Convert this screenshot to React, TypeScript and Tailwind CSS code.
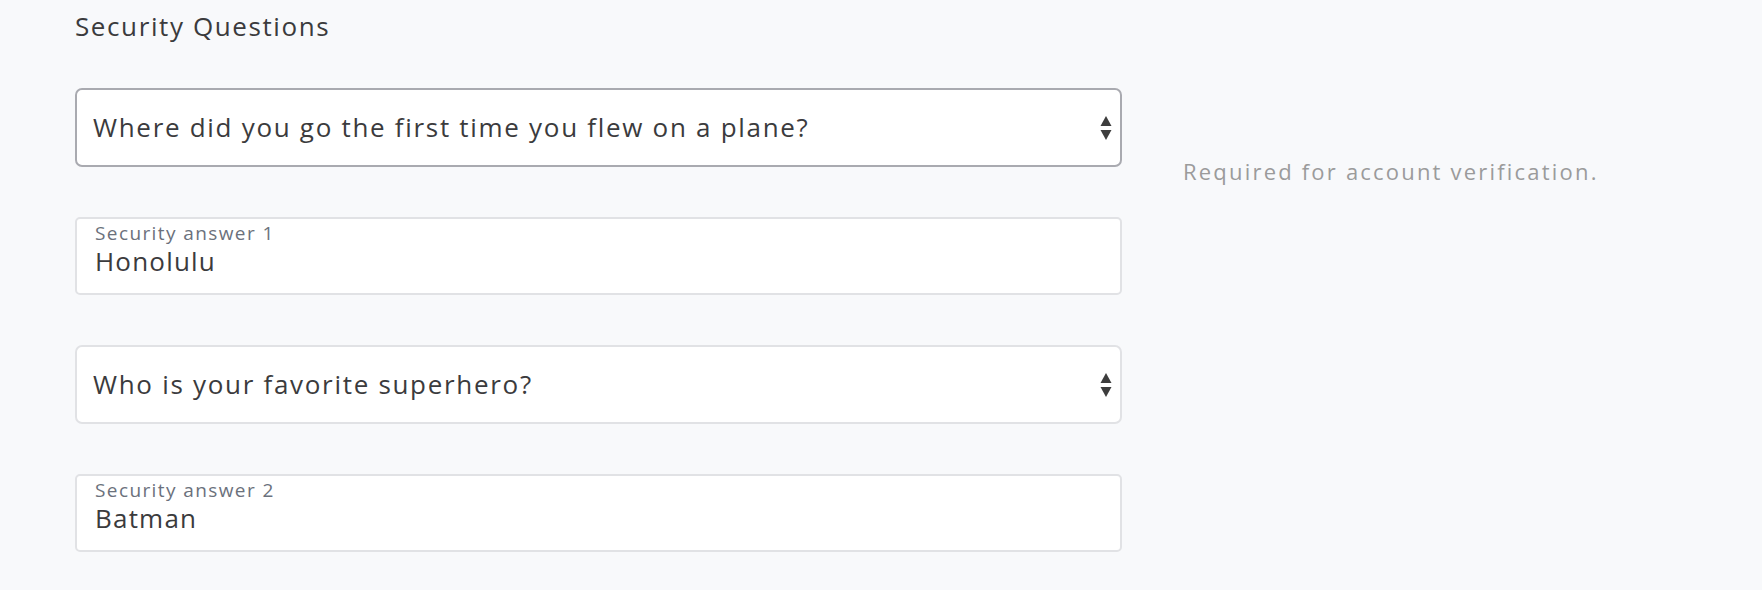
import { ChangeEvent, useState } from 'react';

const questions = [
  'Where did you go the first time you flew on a plane?',
  'Who is your favorite superhero?',
  'What was the name of your first pet?',
  'In what city were you born?',
];

function Arrows() {
  return (
    <svg className="pointer-events-none absolute right-[10px] top-1/2 -translate-y-1/2" width="12" height="26" viewBox="0 0 12 26">
      <path d="M6 1 L11.5 11 L0.5 11 Z" fill="#3d3d3d" />
      <path d="M0.5 15 L11.5 15 L6 25 Z" fill="#3d3d3d" />
    </svg>
  );
}

function QuestionSelect({ value, focused, onChange }: { value: string; focused?: boolean; onChange: (v: string) => void }) {
  return (
    <div className="relative">
      <select
        value={value}
        onChange={(e: ChangeEvent<HTMLSelectElement>) => onChange(e.target.value)}
        className={`h-[79px] w-full appearance-none rounded-[7px] border-2 bg-white pl-[16px] pr-10 text-[26px] tracking-[1.7px] text-[#3b3b3d] outline-none ${
          focused ? 'border-[#a9aab0]' : 'border-[#e1e2e5]'
        }`}
      >
        {questions.map(q => (
          <option key={q} value={q}>{q}</option>
        ))}
      </select>
      <Arrows />
    </div>
  );
}

function AnswerField({ label, value, onChange }: { label: string; value: string; onChange: (v: string) => void }) {
  return (
    <label className="flex h-[78px] flex-col rounded-[5px] border-2 border-[#e1e2e5] bg-white pl-[18px] pt-[2px]">
      <span className="text-[19px] leading-[24px] tracking-[1.4px] text-[#6b717c]">{label}</span>
      <input
        value={value}
        onChange={e => onChange(e.target.value)}
        className="bg-transparent text-[26px] leading-[32px] tracking-[1.2px] text-[#3b3b3d] outline-none"
      />
    </label>
  );
}

export default function App() {
  const [q1, setQ1] = useState(questions[0]);
  const [q2, setQ2] = useState(questions[1]);
  const [a1, setA1] = useState('Honolulu');
  const [a2, setA2] = useState('Batman');

  return (
    <div className="min-h-[590px] bg-[#f8f9fb] pl-[75px] pt-[8px] font-['Open_Sans',sans-serif]">
      <h2 className="text-[26px] leading-[36px] tracking-[1.6px] text-[#3b3b3d]">Security Questions</h2>
      <div className="mt-[44px] flex gap-[61px]">
        <div className="flex w-[1047px] flex-col gap-[50px]">
          <QuestionSelect value={q1} focused onChange={setQ1} />
          <AnswerField label="Security answer 1" value={a1} onChange={setA1} />
          <QuestionSelect value={q2} onChange={setQ2} />
          <AnswerField label="Security answer 2" value={a2} onChange={setA2} />
        </div>
        <p className="mt-[68px] text-[22px] leading-[30px] tracking-[2.2px] text-[#9b9b9b]">Required for account verification.</p>
      </div>
    </div>
  );
}
